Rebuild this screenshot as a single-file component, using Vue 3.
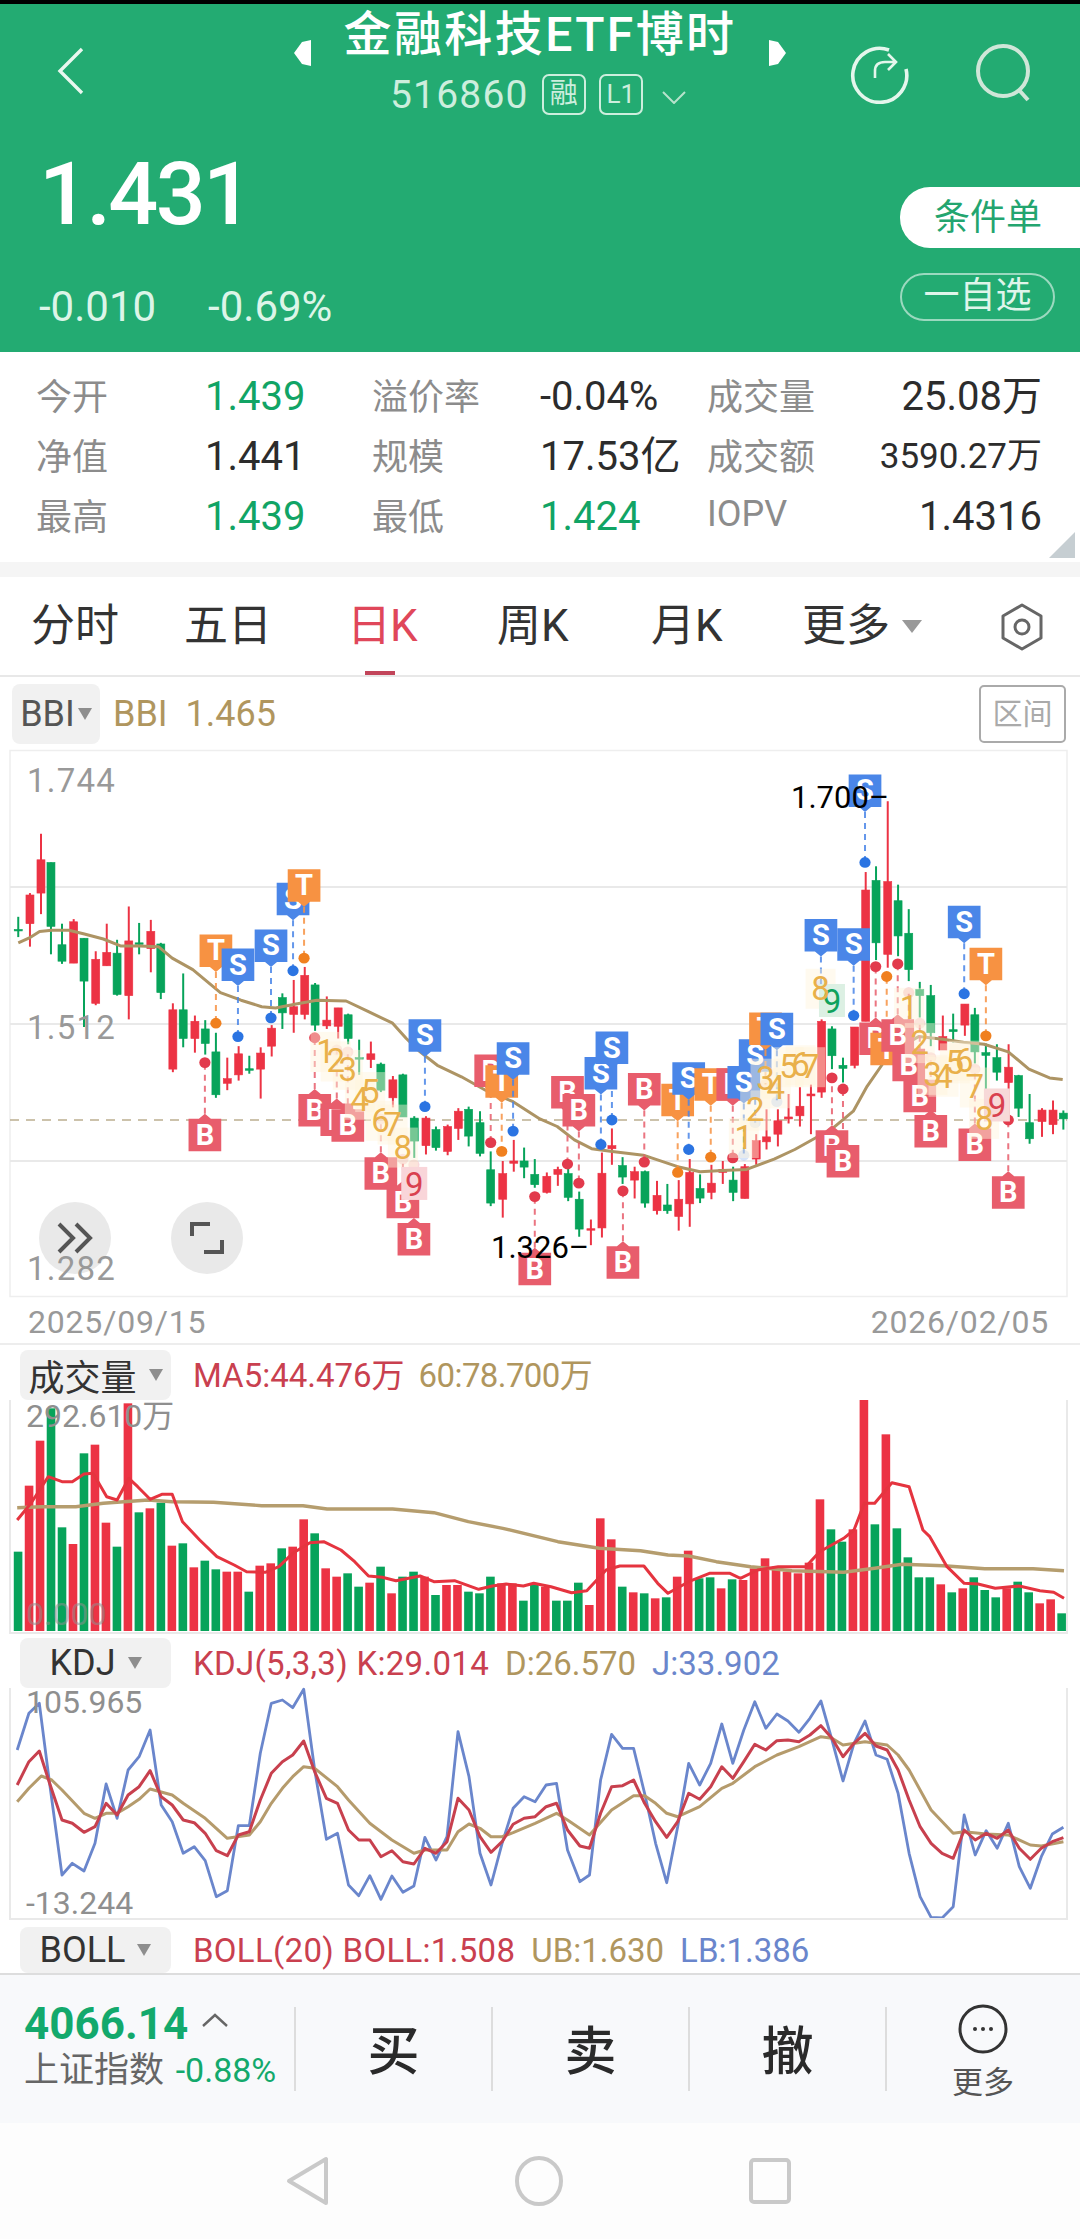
<template>
  <div class="page">
    <div class="notch"></div>

    <header class="head">
      <div class="nav">
        <svg class="back" width="28" height="48" viewBox="0 0 28 48"><path d="M25 2 3 24l22 22" /></svg>
        <div class="center">
          <div class="title-row">
            <svg class="tri" width="17" height="26" viewBox="0 0 17 26"><path d="M17 0v26L8 24 0 13 8 2z" /></svg>
            <span class="title">金融科技ETF博时</span>
            <svg class="tri" width="17" height="26" viewBox="0 0 17 26"><path d="M0 0v26l9-2 8-11-8-11z" /></svg>
          </div>
          <div class="code-row">
            <span class="code">516860</span>
            <span class="tag">融</span>
            <span class="tag tag-l">L1</span>
            <svg width="24" height="13" viewBox="0 0 24 13" class="down"><path d="M1 1l11 11L23 1" /></svg>
          </div>
        </div>
        <div class="actions">
          <svg width="60" height="60" viewBox="0 0 60 60" class="act">
            <path d="M39 6A27 27 0 1 0 56 25" />
            <path d="M25 34V27q0-9 10-9h10M38 10l8 8-8 8" stroke-width="2.6" />
          </svg>
          <svg width="58" height="58" viewBox="0 0 58 58" class="act act-pale">
            <circle cx="28" cy="27" r="25" />
            <path d="M44 46l9 10" />
          </svg>
        </div>
      </div>
      <div class="quote">
        <div>
          <div class="price">1.431</div>
          <div class="change"><span>-0.010</span><span>-0.69%</span></div>
        </div>
        <div class="quote-btns">
          <div class="cond">条件单</div>
          <div class="watch">一自选</div>
        </div>
      </div>
    </header>

    <section class="stats">
      <template v-for="row in stats" :key="row[0]">
        <template v-for="(c, i) in row" :key="i">
          <span :class="i % 2 ? ['val', c.cls] : 'lab'">{{ i % 2 ? c.t : c }}</span>
        </template>
      </template>
      <svg class="corner" width="26" height="26" viewBox="0 0 26 26"><path d="M26 0v26H0z" /></svg>
    </section>
    <div class="gap"></div>

    <nav class="tabs">
      <span v-for="t in tabs" :key="t" class="tab" :class="{ on: t === '日K' }">{{ t }}</span>
      <span class="tab more">更多<i class="caret big"></i></span>
      <svg class="hex" width="44" height="48" viewBox="0 0 44 48"><path d="M22 2 41 13v22L22 46 3 35V13z" /><circle cx="22" cy="24" r="7" /></svg>
    </nav>

    <div class="bbi-row">
      <div class="chip chip-bbi">BBI<i class="caret"></i></div>
      <span class="tan bbi-val">BBI&nbsp; 1.465</span>
      <div class="range">区间</div>
    </div>

    <div class="main-wrap">
      <div class="fab fab-a">
        <svg width="36" height="32" viewBox="0 0 36 32"><path d="M2 2l14 14L2 30M19 2l14 14-14 14" /></svg>
      </div>
      <div class="fab fab-b">
        <svg width="34" height="32" viewBox="0 0 34 32"><path d="M2 14V2h18M32 18v12H14" /></svg>
      </div>
      <svg class="chart over" width="1080" height="547" viewBox="0 0 1080 547">
        <rect x="10" y="0.5" width="1057" height="546" class="frame" />
        <line v-for="y in gridY" :key="y" x1="10" x2="1067" :y1="y" :y2="y" class="grid" />
        <line x1="10" x2="1067" y1="370" y2="370" class="dash" />
        <g v-for="c in candles" :key="c.x" :fill="c.color" :stroke="c.color">
          <line :x1="c.x" :x2="c.x" :y1="c.w1" :y2="c.w2" stroke-width="2" />
          <rect :x="c.x - 4" :y="c.b1" width="8" :height="c.bh" stroke-width="0.6" />
        </g>
        <polyline :points="bbiLine" class="ln tan-ln" />
        <g v-for="(m, i) in marks" :key="'m' + i">
          <line :x1="m.x" :x2="m.x" :y1="m.from" :y2="m.dot" class="stem" :stroke="m.color" />
          <ellipse :cx="m.x" :cy="m.dot" rx="5.6" ry="5.4" :fill="m.dotColor" :opacity="m.dotOp" />
          <path :d="m.path" :fill="m.color" />
          <text :x="m.x" :y="m.top + 26" class="sign">{{ m.t }}</text>
        </g>
        <rect v-for="(h, i) in halos" :key="'h' + i" :x="h.x - 15" :y="h.y - 20" width="30" height="40" class="halo" />
        <g v-for="(n, i) in nines" :key="'n' + i">
          <rect :x="n.x - 13" :y="n.y - 17" width="26" height="33" :fill="n.bg" />
          <text :x="n.x" :y="n.y + 12" class="seq" :fill="n.color">9</text>
        </g>
        <text v-for="(h, i) in halos" :key="'s' + i" :x="h.x" :y="h.y + 11" class="seq" fill="#e9b04a">{{ h.n }}</text>
        <text x="27" y="42" class="axis">1.744</text>
        <text x="27" y="289" class="axis">1.512</text>
        <text x="27" y="530" class="axis">1.282</text>
        <text x="791" y="58" class="peak">1.700–</text>
        <text x="491" y="508" class="peak">1.326–</text>
      </svg>
    </div>
    <div class="dates"><span>2025/09/15</span><span>2026/02/05</span></div>

    <div class="ind-head vol-head">
      <div class="chip">成交量<i class="caret"></i></div>
      <span class="red">MA5:44.476万</span><span class="tan narrow">60:78.700万</span>
    </div>
    <svg class="chart" width="1080" height="234" viewBox="0 0 1080 234">
      <line x1="10" x2="10" y1="0" y2="234" class="grid" />
      <line x1="1067" x2="1067" y1="0" y2="234" class="grid" />
      <rect v-for="b in bars" :key="b.x" :x="b.x" :y="b.y" width="8.6" :height="b.h" :fill="b.color" />
      <polyline :points="ma60" class="ln" stroke="#b59d6e" stroke-width="3.4" />
      <polyline :points="ma5" class="ln" stroke="#e5343f" stroke-width="3" />
      <text x="26" y="27" class="axis small">292.610万</text>
      <text x="26" y="225" class="axis small ghost">0.000</text>
      <line x1="10" x2="1067" y1="233" y2="233" class="grid" />
    </svg>

    <div class="ind-head kdj-head">
      <div class="chip">KDJ<i class="caret"></i></div>
      <span class="red wide">KDJ(5,3,3) K:29.014</span><span class="tan">D:26.570</span><span class="blue">J:33.902</span>
    </div>
    <svg class="chart" width="1080" height="232" viewBox="0 0 1080 232">
      <line x1="10" x2="10" y1="0" y2="232" class="grid" />
      <line x1="1067" x2="1067" y1="0" y2="232" class="grid" />
      <polyline :points="kdjJ" class="ln" stroke="#6a86cc" stroke-width="2.8" />
      <polyline :points="kdjD" class="ln" stroke="#b59b6c" stroke-width="3" />
      <polyline :points="kdjK" class="ln" stroke="#c8404e" stroke-width="3" />
      <text x="26" y="25" class="axis small">105.965</text>
      <text x="26" y="226" class="axis small">-13.244</text>
      <line x1="10" x2="1067" y1="231" y2="231" class="grid" />
    </svg>

    <div class="ind-head boll-head">
      <div class="chip">BOLL<i class="caret"></i></div>
      <span class="red wide">BOLL(20) BOLL:1.508</span><span class="tan">UB:1.630</span><span class="blue">LB:1.386</span>
    </div>

    <div class="trade">
      <div class="index">
        <div class="idx-top">4066.14
          <svg width="26" height="14" viewBox="0 0 26 14"><path d="M1 13 13 2l12 11" /></svg>
        </div>
        <div class="idx-sub">上证指数 <b>-0.88%</b></div>
      </div>
      <div class="act-cell">买</div>
      <div class="act-cell">卖</div>
      <div class="act-cell">撤</div>
      <div class="act-cell more-cell">
        <svg width="50" height="50" viewBox="0 0 50 50">
          <circle cx="25" cy="25" r="23" class="ring" />
          <circle cx="17" cy="25" r="2" /><circle cx="25" cy="25" r="2" /><circle cx="33" cy="25" r="2" />
        </svg>
        <span>更多</span>
      </div>
    </div>

    <div class="sysbar">
      <svg width="43" height="50" viewBox="0 0 43 50"><path d="M40 3v44L3 25z" /></svg>
      <svg width="48" height="50" viewBox="0 0 48 50"><ellipse cx="24" cy="25" rx="22" ry="23" /></svg>
      <svg width="42" height="46" viewBox="0 0 42 46"><rect x="2" y="2" width="38" height="42" rx="3" /></svg>
    </div>
  </div>
</template>

<script setup>
const RED = '#ec3344'
const GREEN = '#07a35a'

const stats = [
  ['今开', { t: '1.439', cls: 'up' }, '溢价率', { t: '-0.04%' }, '成交量', { t: '25.08万', cls: 'r' }],
  ['净值', { t: '1.441' }, '规模', { t: '17.53亿' }, '成交额', { t: '3590.27万', cls: 'r sm' }],
  ['最高', { t: '1.439', cls: 'up' }, '最低', { t: '1.424', cls: 'up' }, 'IOPV', { t: '1.4316', cls: 'r' }]
]
const tabs = ['分时', '五日', '日K', '周K', '月K']

// main chart values were read off the zoomed crops, so map them back to px
const mx = (x) => x / 2.904
const my = (y) => y / 2.613 - 10
const gridY = [137, 274, 411]

// [x, wick top, wick bottom, body top, body bottom, r/g]
const rawCandles = [
  [53, 462, 515, 495, 498, 'g'], [87, 400, 540, 405, 480, 'r'], [119, 245, 455, 313, 400, 'r'], [148, 320, 560, 320, 487, 'g'],
  [180, 480, 585, 535, 578, 'g'], [214, 468, 583, 475, 583, 'r'], [244, 518, 750, 518, 630, 'g'], [278, 552, 693, 573, 688, 'r'],
  [310, 480, 590, 555, 590, 'r'], [340, 522, 668, 557, 665, 'g'], [374, 435, 730, 525, 668, 'r'], [404, 478, 560, 530, 534, 'g'],
  [438, 470, 607, 500, 545, 'r'], [467, 530, 677, 533, 660, 'g'], [502, 688, 868, 705, 860, 'r'], [532, 610, 803, 705, 780, 'g'],
  [566, 720, 817, 735, 780, 'r'], [596, 732, 822, 755, 793, 'g'], [627, 765, 935, 815, 927, 'g'], [660, 830, 915, 885, 897, 'r'],
  [693, 800, 890, 820, 875, 'r'], [724, 825, 872, 859, 863, 'g'], [757, 803, 937, 818, 860, 'r'], [789, 745, 827, 753, 800, 'r'],
  [820, 662, 755, 673, 713, 'g'], [853, 627, 765, 697, 717, 'r'], [885, 593, 730, 615, 717, 'r'], [915, 635, 760, 640, 745, 'g'],
  [949, 670, 755, 732, 747, 'r'], [982, 700, 780, 700, 748, 'r'], [1011, 715, 795, 718, 780, 'g'], [1043, 783, 875, 830, 834, 'g'],
  [1077, 788, 857, 820, 835, 'r'], [1106, 843, 920, 847, 915, 'g'], [1141, 878, 960, 888, 935, 'r'], [1170, 872, 985, 875, 985, 'g'],
  [1203, 983, 1092, 988, 1048, 'g'], [1237, 983, 1083, 988, 1060, 'r'], [1266, 1010, 1073, 1018, 1065, 'g'], [1300, 1005, 1085, 1010, 1075, 'r'],
  [1331, 962, 1045, 970, 1015, 'r'], [1361, 958, 1062, 965, 1035, 'g'], [1394, 970, 1088, 1000, 1080, 'g'], [1425, 1075, 1218, 1123, 1210, 'g'],
  [1460, 1100, 1248, 1133, 1200, 'r'], [1492, 1045, 1128, 1100, 1106, 'r'], [1522, 1065, 1145, 1100, 1116, 'g'], [1553, 1095, 1170, 1135, 1162, 'g'],
  // right half, x counted from the second crop
  [1588, 1130, 1185, 1140, 1182, 'r'], [1620, 1115, 1165, 1122, 1135, 'r'], [1650, 1100, 1205, 1133, 1195, 'g'], [1682, 1180, 1298, 1200, 1278, 'g'],
  [1716, 1253, 1320, 1277, 1280, 'r'], [1748, 1078, 1300, 1132, 1275, 'r'], [1777, 1015, 1110, 1060, 1068, 'r'], [1808, 1090, 1160, 1112, 1142, 'g'],
  [1843, 1115, 1198, 1128, 1150, 'r'], [1873, 1125, 1222, 1128, 1210, 'g'], [1908, 1152, 1240, 1190, 1230, 'r'], [1938, 1160, 1238, 1215, 1230, 'g'],
  [1971, 1150, 1282, 1200, 1245, 'r'], [2003, 1095, 1272, 1130, 1212, 'r'], [2033, 1135, 1210, 1172, 1197, 'g'], [2066, 1110, 1200, 1158, 1182, 'r'],
  [2099, 1100, 1160, 1122, 1130, 'r'], [2129, 1115, 1205, 1150, 1182, 'g'], [2163, 1108, 1198, 1115, 1198, 'r'], [2196, 1030, 1110, 1047, 1095, 'r'],
  [2226, 965, 1070, 1037, 1050, 'r'], [2259, 965, 1062, 995, 1030, 'r'], [2290, 925, 1002, 985, 990, 'r'], [2323, 907, 1010, 957, 982, 'r'],
  [2355, 900, 1030, 925, 930, 'r'], [2386, 730, 935, 735, 920, 'r'], [2416, 748, 860, 755, 825, 'g'], [2448, 830, 895, 850, 858, 'g'],
  [2482, 750, 858, 750, 850, 'r'], [2514, 345, 735, 392, 735, 'r'], [2544, 330, 575, 367, 530, 'g'], [2578, 160, 595, 370, 560, 'r'],
  [2608, 378, 565, 420, 512, 'g'], [2639, 442, 630, 505, 600, 'g'], [2671, 632, 725, 652, 668, 'g'], [2703, 640, 800, 668, 765, 'g'],
  [2738, 720, 810, 775, 810, 'r'], [2768, 715, 790, 757, 762, 'g'], [2802, 690, 773, 690, 745, 'r'], [2831, 700, 845, 718, 815, 'g'],
  [2863, 793, 990, 817, 824, 'g'], [2895, 795, 890, 830, 868, 'g'], [2929, 795, 990, 855, 895, 'r'], [2958, 875, 985, 877, 962, 'g'],
  [2990, 925, 1055, 1000, 1042, 'g'], [3026, 962, 1037, 967, 997, 'r'], [3058, 942, 1030, 967, 1005, 'r'], [3088, 968, 1018, 975, 990, 'g']
]

const candles = rawCandles.map(([x, w1, w2, b1, b2, c]) => ({
  x: mx(x),
  w1: my(w1),
  w2: my(w2),
  b1: my(b1),
  bh: Math.max((b2 - b1) / 2.613, 1.5),
  color: c === 'r' ? RED : GREEN
}))

const toPts = (arr, fx, fy) => {
  const out = []
  for (let i = 0; i < arr.length; i += 2) out.push(fx(arr[i]).toFixed(1) + ',' + fy(arr[i + 1]).toFixed(1))
  return out.join(' ')
}

const bbiLine = toPts([
  53, 530, 85, 517, 115, 500, 150, 497, 200, 497, 245, 507, 300, 520, 350, 538, 405, 538, 460, 540, 500, 570, 560, 600, 600, 630, 640, 660,
  700, 680, 760, 697, 800, 700, 860, 690, 920, 680, 1005, 682, 1070, 710, 1140, 740, 1180, 780, 1220, 815, 1270, 850, 1340, 880, 1410, 915,
  1490, 945, 1568, 990, 1618, 1010, 1668, 1045, 1718, 1068, 1778, 1075, 1868, 1085, 1968, 1115, 2033, 1128, 2098, 1125, 2168, 1122, 2248, 1095,
  2308, 1070, 2368, 1040, 2418, 1015, 2478, 970, 2518, 905, 2568, 840, 2618, 800, 2668, 775, 2738, 782, 2798, 790, 2858, 795, 2928, 815,
  2988, 860, 3048, 883, 3086, 887
], mx, my)

const COLORS = { S: '#4a86e8', T: '#f79242', B: '#e85d6c' }
const DOTS = { S: '#2b74e2', T: '#f0801f', B: '#e23a4c' }

// [letter, x, rect top, dot y, dot opacity]
const rawMarks = [
  ['T', 627, 508, 740], ['S', 691, 545, 775], ['S', 787, 495, 726], ['S', 851, 373, 603], ['T', 883, 338, 570],
  ['B', 595, 990, 843], ['B', 914, 925, 778], ['B', 978, 950, 810, 0.2], ['B', 1010, 965, 815, 0.2],
  ['B', 1106, 1090, 990, 0.2], ['B', 1170, 1165, 1095, 0.2], ['B', 1202, 1262, 1110, 0.2],
  ['S', 1234, 730, 958], ['B', 1425, 822, 1052], ['T', 1457, 850, 1075], ['S', 1490, 790, 1022], ['B', 1553, 1340, 1193],
  ['B', 1648, 878, 1108], ['B', 1681, 925, 1158], ['S', 1745, 828, 1057], ['S', 1777, 762, 993], ['B', 1809, 1323, 1178],
  ['B', 1871, 870, 1103], ['T', 1968, 898, 1130], ['S', 2000, 842, 1070], ['T', 2064, 858, 1090], ['B', 2128, 858, 1092],
  ['S', 2160, 852, 1085, 0.2], ['S', 2193, 782, 1000, 0.2], ['T', 2223, 712, 900, 0.2], ['S', 2256, 713, 945, 0.2],
  ['S', 2384, 468, 640, 0.2], ['S', 2479, 492, 720], ['S', 2512, 90, 320],
  ['B', 2416, 1020, 883], ['B', 2448, 1058, 912], ['B', 2543, 738, 592], ['T', 2575, 765, 618], ['B', 2607, 730, 585],
  ['B', 2639, 807, 660, 0.25], ['B', 2671, 888, 740, 0.2], ['B', 2703, 980, 830, 0.2], ['B', 2831, 1015, 860, 0.2],
  ['B', 2928, 1140, 993], ['S', 2800, 433, 663], ['T', 2863, 543, 773]
]

const W = 32.7
const H = 32.5
const marks = rawMarks.map(([t, x0, top0, dot0, op]) => {
  const x = mx(x0)
  const top = my(top0)
  const dot = my(dot0)
  const up = dot < top
  const l = x - W / 2
  const r = x + W / 2
  const b = top + H
  const path = up
    ? `M${l} ${top}H${x - 6}L${x} ${top - 5}L${x + 6} ${top}H${r}V${b}H${l}Z`
    : `M${l} ${top}H${r}V${b}H${x + 6}L${x} ${b + 5}L${x - 6} ${b}H${l}Z`
  return { t, x, top, dot, path, from: up ? top - 5 : b + 5, color: COLORS[t], dotColor: DOTS[t], dotOp: op ?? 1 }
})

// TD sequence digits: [digit, x, y]
const halos = [
  [1, 945, 815], [2, 975, 840], [3, 1010, 862], [4, 1045, 940], [5, 1075, 920], [6, 1105, 995], [7, 1140, 1005], [8, 1170, 1065],
  [1, 2160, 1040], [2, 2193, 968], [3, 2223, 885], [4, 2253, 910], [5, 2290, 855], [6, 2325, 850], [7, 2353, 855], [8, 2383, 650],
  [1, 2640, 700], [2, 2671, 792], [3, 2708, 875], [4, 2740, 880], [5, 2773, 845], [6, 2800, 838], [7, 2831, 908], [8, 2858, 990]
].map(([n, x, y]) => ({ n, x: mx(x), y: my(y) }))

const nines = [
  { x: mx(1203), y: my(1160), bg: '#f9d5d9', color: '#d9404f' },
  { x: mx(2416), y: my(682), bg: '#dcf0e3', color: '#0fa25c' },
  { x: mx(2895), y: my(955), bg: '#f7d9d8', color: '#d9404f' }
]

// volume panel: tops read from the crop, baseline at 873
const vx = (x) => x / 1.452
const vy = (y) => y / 3 - 60
const rawBars = 'g635 r437 r302 g205 g562 r612 g340 r314 r548 g620 r190 g517 r505 g488 r617 g610 r682 g662 g688 r695 r695 g755 r677 r670 g625 r620 r538 g580 r685 r710 g700 g740 r728 g680 r760 g710 g695 r710 g765 r735 r735 g755 g760 g710 r730 r730 g782 g735 r740 g782 g782 g728 r795 r535 r598 g740 r757 g760 r775 g772 r710 r632 g715 g712 r745 g718 r720 r685 r655 r680 r695 r700 r668 r478 g568 g605 r568 r180 g553 r283 g565 g652 g712 g712 r733 g757 r745 g712 g750 g772 r745 g725 g757 r790 r778 g820'.split(' ')
const bars = rawBars.map((s, i) => {
  const top = Number(s.slice(1))
  return { x: vx(20 + 15.95 * i), y: vy(top), h: (873 - top) / 3, color: s[0] === 'r' ? RED : GREEN }
})

const ma5 = toPts([
  25, 540, 45, 490, 70, 410, 90, 425, 105, 425, 122, 402, 135, 400, 155, 470, 170, 480, 187, 415, 200, 440, 218, 478, 235, 463, 250, 463, 265, 545,
  290, 600, 315, 650, 340, 675, 358, 695, 385, 697, 405, 680, 425, 640, 450, 608, 470, 605, 495, 630, 515, 665, 535, 708, 555, 712, 575, 722, 610, 708,
  630, 725, 660, 722, 695, 748, 715, 738, 735, 732, 760, 738, 775, 730, 800, 740, 830, 758, 852, 752, 880, 690, 900, 678, 935, 678, 955, 730, 970, 760,
  1000, 725, 1030, 700, 1060, 700, 1075, 715, 1100, 690, 1130, 680, 1170, 680, 1190, 635, 1225, 595, 1240, 570, 1255, 490, 1270, 490, 1295, 428, 1320, 440,
  1340, 570, 1350, 590, 1375, 680, 1400, 730, 1420, 732, 1445, 745, 1480, 738, 1510, 752, 1530, 757, 1545, 775
], vx, vy)
const ma60 = toPts([
  25, 503, 60, 500, 110, 500, 150, 490, 215, 480, 250, 485, 310, 487, 380, 497, 440, 497, 475, 507, 570, 507, 630, 518, 680, 545, 730, 565, 810, 605,
  870, 625, 930, 632, 970, 645, 1000, 648, 1040, 665, 1090, 680, 1150, 692, 1225, 697, 1270, 685, 1310, 673, 1370, 677, 1430, 686, 1500, 686, 1545, 692
], vx, vy)

const ky = (y) => y / 3 - 48
const kdjJ = toPts([
  25, 330, 42, 220, 57, 190, 72, 430, 90, 705, 105, 670, 122, 693, 138, 610, 154, 432, 170, 535, 186, 390, 202, 350, 218, 270, 234, 495, 250, 545, 266, 640,
  282, 620, 298, 662, 314, 770, 330, 752, 346, 557, 362, 557, 378, 340, 394, 190, 410, 180, 425, 203, 441, 148, 457, 390, 474, 598, 490, 580, 506, 735, 521, 767,
  537, 707, 553, 778, 569, 708, 585, 757, 601, 738, 617, 592, 633, 660, 649, 590, 665, 275, 681, 410, 697, 640, 713, 735, 729, 610, 745, 505, 761, 470, 777, 485,
  793, 435, 808, 430, 824, 630, 842, 725, 856, 705, 872, 420, 888, 283, 904, 325, 920, 325, 936, 460, 952, 610, 968, 728, 984, 560, 1000, 370, 1016, 435, 1032, 370,
  1048, 252, 1064, 370, 1080, 270, 1096, 185, 1112, 265, 1128, 222, 1144, 243, 1160, 277, 1176, 235, 1192, 183, 1208, 300, 1224, 423, 1240, 310, 1256, 243, 1272, 345,
  1288, 358, 1304, 460, 1320, 640, 1336, 770, 1352, 832, 1368, 834, 1384, 800, 1400, 525, 1416, 645, 1432, 572, 1448, 625, 1464, 550, 1480, 680, 1496, 745, 1512, 650, 1528, 582, 1544, 562
], vx, ky)
const kdjK = toPts([
  25, 435, 42, 365, 57, 333, 72, 430, 90, 540, 105, 550, 122, 577, 138, 560, 154, 490, 170, 525, 186, 465, 202, 440, 218, 392, 234, 470, 250, 495, 266, 540,
  282, 548, 298, 580, 314, 632, 330, 647, 346, 585, 362, 575, 378, 480, 394, 400, 410, 365, 425, 345, 441, 303, 457, 395, 474, 475, 490, 490, 506, 570, 521, 600,
  537, 600, 553, 650, 569, 632, 585, 665, 601, 672, 617, 625, 633, 640, 649, 605, 665, 475, 681, 510, 697, 590, 713, 637, 729, 605, 745, 553, 761, 535, 777, 530,
  793, 500, 808, 490, 824, 570, 842, 618, 856, 625, 872, 520, 888, 440, 904, 437, 920, 420, 936, 490, 952, 545, 968, 592, 984, 545, 1000, 460, 1016, 478, 1032, 440,
  1048, 380, 1064, 415, 1080, 365, 1096, 313, 1112, 330, 1128, 302, 1144, 300, 1160, 305, 1176, 285, 1192, 257, 1208, 295, 1224, 350, 1240, 310, 1256, 280, 1272, 318,
  1288, 330, 1304, 390, 1320, 480, 1336, 560, 1352, 610, 1368, 640, 1384, 655, 1400, 570, 1416, 600, 1432, 580, 1448, 595, 1464, 570, 1480, 625, 1496, 658, 1512, 625, 1528, 605, 1544, 593
], vx, ky)
const kdjD = toPts([
  25, 485, 42, 445, 60, 408, 75, 420, 90, 450, 122, 520, 138, 535, 154, 520, 170, 520, 186, 500, 202, 478, 218, 447, 250, 465, 266, 490, 298, 535, 330, 595,
  362, 585, 378, 545, 394, 490, 410, 445, 425, 410, 441, 380, 457, 385, 490, 440, 506, 480, 537, 550, 569, 600, 601, 640, 617, 630, 649, 630, 665, 575, 681, 552,
  697, 565, 713, 590, 729, 590, 745, 578, 777, 550, 808, 520, 824, 540, 856, 585, 888, 510, 920, 467, 936, 467, 952, 490, 968, 520, 984, 530, 1016, 500, 1048, 445,
  1064, 430, 1096, 380, 1128, 345, 1160, 320, 1192, 290, 1208, 295, 1224, 315, 1256, 305, 1288, 315, 1304, 345, 1320, 390, 1352, 510, 1384, 580, 1400, 575, 1432, 582,
  1464, 585, 1496, 615, 1512, 618, 1544, 605
], vx, ky)
</script>

<style>
html,
body {
  margin: 0;
  background: #fff;
}
</style>

<style scoped>
.page {
  width: 1080px;
  height: 2239px;
  overflow: hidden;
  background: #fff;
  font-family: Roboto, "Noto Sans CJK SC", sans-serif;
  color: #2b2b2b;
}

.notch {
  height: 4px;
  background: #000;
}

.head {
  height: 348px;
  background: #23ab72;
  color: #fff;
}

.nav {
  display: grid;
  grid-template-columns: 294px 492px 1fr;
  height: 110px;
}

.back {
  margin: 43px 0 0 57px;
}
.back path {
  fill: none;
  stroke: #e9f7ef;
  stroke-width: 3.4;
}

.title-row {
  display: flex;
  justify-content: space-between;
}
.title {
  font-size: 48px;
  line-height: 60px;
  letter-spacing: 2.4px;
  font-weight: 500;
  white-space: nowrap;
  margin-top: 1px;
}
.tri {
  margin-top: 36px;
}
.tri path {
  fill: #fff;
}

.code-row {
  display: flex;
  align-items: center;
  gap: 13px;
  height: 41px;
  margin-top: 8px;
  padding-left: 96px;
  color: #cdeedd;
}
.code {
  font-size: 39px;
  letter-spacing: 1.2px;
}
.tag {
  box-sizing: border-box;
  width: 44px;
  height: 41px;
  border: 2px solid #cdeedd;
  border-radius: 7px;
  font-size: 28px;
  line-height: 36px;
  text-align: center;
}
.tag-l {
  font-size: 26px;
}
.down {
  margin-left: 6px;
  margin-top: 6px;
}
.down path {
  fill: none;
  stroke: #b7e3cc;
  stroke-width: 2;
}

.actions {
  display: flex;
  gap: 65px;
  padding: 40px 0 0 64px;
}
.act {
  fill: none;
  stroke: #e4f6ec;
  stroke-width: 3.6;
}
.act-pale {
  stroke: #cfe6d8;
  stroke-width: 4;
}

.quote {
  display: flex;
  justify-content: space-between;
  padding-left: 39px;
}
.price {
  margin-top: 35px;
  font-size: 88px;
  line-height: 90px;
  font-weight: 500;
  letter-spacing: -2.6px;
}
.change {
  display: flex;
  gap: 52px;
  margin-top: 48px;
  font-size: 42px;
  line-height: 40px;
  color: #dcf5e8;
}
.quote-btns {
  display: flex;
  flex-direction: column;
  align-items: flex-start;
  width: 180px;
  margin-top: 73px;
  font-size: 36px;
}
.cond {
  box-sizing: border-box;
  width: 180px;
  height: 61px;
  padding-left: 34px;
  border-radius: 30px 0 0 30px;
  background: #fff;
  color: #23a56f;
  line-height: 62px;
}
.watch {
  box-sizing: border-box;
  width: 155px;
  height: 48px;
  margin-top: 25px;
  border: 2px solid rgba(255, 255, 255, 0.55);
  border-radius: 24px;
  color: #dff5ea;
  line-height: 43px;
  text-align: center;
}

.stats {
  position: relative;
  display: grid;
  grid-template-columns: 169px 167px 168px 167px 110px 1fr;
  grid-auto-rows: 60px;
  align-items: center;
  box-sizing: border-box;
  height: 210px;
  padding: 12px 38px 0 36px;
}
.lab {
  font-size: 36px;
  color: #8c8c8c;
}
.val {
  font-size: 40px;
  line-height: 44px;
  margin-top: 6px;
  white-space: nowrap;
  color: #2c2c2c;
}
.val.up {
  color: #11a465;
}
.val.r {
  justify-self: end;
}
.val.sm {
  font-size: 35px;
}
.corner {
  position: absolute;
  right: 5px;
  bottom: 4px;
}
.corner path {
  fill: #c6ced2;
}

.gap {
  height: 15px;
  background: #f5f5f5;
}

.tabs {
  display: grid;
  grid-template-columns: 153px 163px 150px 154px 151px 198px 1fr;
  align-items: center;
  box-sizing: border-box;
  height: 100px;
  padding: 1px 0 0 31px;
  border-bottom: 2px solid #e8e8e8;
  font-size: 44px;
  color: #333;
}
.tab {
  position: relative;
  line-height: 97px;
}
.tab.on {
  color: #e0475a;
  letter-spacing: -1px;
}
.tab.on::after {
  content: "";
  position: absolute;
  left: 18px;
  bottom: 0;
  width: 30px;
  height: 4px;
  background: #c2455a;
}
.more {
  display: flex;
  align-items: center;
  gap: 12px;
}
.hex path,
.hex circle {
  fill: none;
  stroke: #666;
  stroke-width: 3;
  stroke-linejoin: round;
}

.caret {
  display: inline-block;
  width: 0;
  height: 0;
  border-left: 7px solid transparent;
  border-right: 7px solid transparent;
  border-top: 12px solid #8e8e8e;
}
.caret.big {
  border-left-width: 10px;
  border-right-width: 10px;
  border-top: 13px solid #999;
}

.bbi-row {
  display: flex;
  align-items: center;
  height: 73px;
  padding: 0 14px 0 12px;
  font-size: 36px;
}
.chip {
  display: flex;
  align-items: center;
  justify-content: center;
  gap: 12px;
  box-sizing: border-box;
  flex: none;
  width: 151px;
  height: 50px;
  border-radius: 8px;
  background: #f1f1f1;
  font-size: 36px;
  color: #333;
}
.chip-bbi {
  width: 88px;
  height: 60px;
  gap: 3px;
  font-size: 36px;
  color: #555;
}
.bbi-val {
  margin-left: 13px;
}
.range {
  box-sizing: border-box;
  width: 87px;
  height: 58px;
  margin-left: auto;
  border: 2px solid #aaa;
  border-radius: 5px;
  color: #aaa;
  font-size: 30px;
  line-height: 54px;
  text-align: center;
}

.tan {
  color: #b0965e;
}
.red {
  color: #c9404f;
}
.blue {
  color: #6a86cc;
}

.main-wrap {
  position: relative;
  height: 547px;
}
.chart {
  display: block;
  overflow: visible;
}
.over {
  position: relative;
}
.frame {
  fill: none;
  stroke: #eee;
  stroke-width: 1.5;
}
.grid {
  stroke: #e9e9e9;
  stroke-width: 2;
}
.dash {
  stroke: #bcae90;
  stroke-width: 1.6;
  stroke-dasharray: 9 7;
}
.ln {
  fill: none;
  stroke-linejoin: round;
}
.tan-ln {
  stroke: #ad9464;
  stroke-width: 3;
}
.stem {
  stroke-width: 2;
  stroke-dasharray: 6 5;
  opacity: 0.85;
}
.halo {
  fill: #fff3dc;
  opacity: 0.45;
}
.sign {
  font-size: 29px;
  font-weight: 700;
  fill: #fff;
  text-anchor: middle;
}
.seq {
  font-size: 33px;
  text-anchor: middle;
}
.axis {
  font-size: 33px;
  letter-spacing: 1.2px;
  fill: #999;
}
.axis.small {
  font-size: 32px;
  letter-spacing: 0;
  fill: #8f8f8f;
}
.axis.ghost {
  opacity: 0.55;
}
.peak {
  font-size: 31px;
  fill: #000;
}

.fab {
  position: absolute;
  top: 452px;
  display: flex;
  align-items: center;
  justify-content: center;
  width: 72px;
  height: 72px;
  border-radius: 50%;
  background: #e9e9e9;
}
.fab svg path {
  fill: none;
  stroke: #555;
  stroke-width: 4;
}
.fab-a {
  left: 39px;
}
.fab-b {
  left: 171px;
}

.dates {
  display: flex;
  justify-content: space-between;
  box-sizing: border-box;
  height: 48px;
  padding: 6px 31px 0 28px;
  border-bottom: 2px solid #ededed;
  font-size: 32px;
  letter-spacing: 0.8px;
  color: #999;
}

.ind-head {
  display: flex;
  align-items: center;
  gap: 16px;
  padding-left: 20px;
  font-size: 33px;
}
.ind-head .chip {
  margin-right: 6px;
}
.narrow {
  letter-spacing: -0.6px;
  margin-left: -2px;
}
.wide {
  letter-spacing: 0.3px;
}
.vol-head {
  height: 55px;
}
.kdj-head {
  height: 50px;
  margin-top: 4px;
}
.boll-head {
  box-sizing: border-box;
  height: 53px;
  padding-top: 5px;
  border-bottom: 2px solid #ddd;
  margin-top: 2px;
}
.boll-head .chip {
  height: 46px;
}
.vol-head .chip {
  margin-top: 5px;
}

.trade {
  display: flex;
  align-items: center;
  height: 148px;
  background: #f8f9fb;
}
.index {
  box-sizing: border-box;
  width: 294px;
  padding-left: 24px;
  margin-top: -5px;
}
.idx-top {
  display: flex;
  align-items: center;
  gap: 14px;
  font-size: 44px;
  font-weight: 700;
  line-height: 44px;
  color: #13a96c;
}
.idx-top svg {
  margin-top: -8px;
}
.idx-top path {
  fill: none;
  stroke: #666;
  stroke-width: 2.4;
}
.idx-sub {
  margin-top: 4px;
  font-size: 35px;
  line-height: 40px;
  color: #666;
  white-space: nowrap;
}
.idx-sub b {
  margin-left: 3px;
  font-size: 34px;
  font-weight: 400;
  color: #13a96c;
}
.act-cell {
  display: flex;
  align-items: center;
  justify-content: center;
  box-sizing: border-box;
  width: 197px;
  height: 84px;
  padding-bottom: 4px;
  border-left: 2px solid #ddd;
  font-size: 52px;
  font-weight: 500;
  color: #2a2a2a;
}
.more-cell {
  flex-direction: column;
  justify-content: flex-start;
  width: 194px;
  padding: 0;
  font-size: 31px;
  font-weight: 400;
  line-height: 36px;
  color: #555;
}
.more-cell svg {
  flex: none;
  margin-top: -3px;
}
.more-cell circle {
  fill: #333;
}
.more-cell .ring {
  fill: none;
  stroke: #333;
  stroke-width: 3;
}
.more-cell span {
  flex: none;
  margin-top: 11px;
}

.sysbar {
  display: flex;
  align-items: center;
  justify-content: center;
  gap: 186px;
  height: 116px;
  padding-right: 3px;
  background: #fdfdfd;
}
.sysbar path,
.sysbar ellipse,
.sysbar rect {
  fill: none;
  stroke: #c9c9c9;
  stroke-width: 4;
  stroke-linejoin: round;
}
</style>
